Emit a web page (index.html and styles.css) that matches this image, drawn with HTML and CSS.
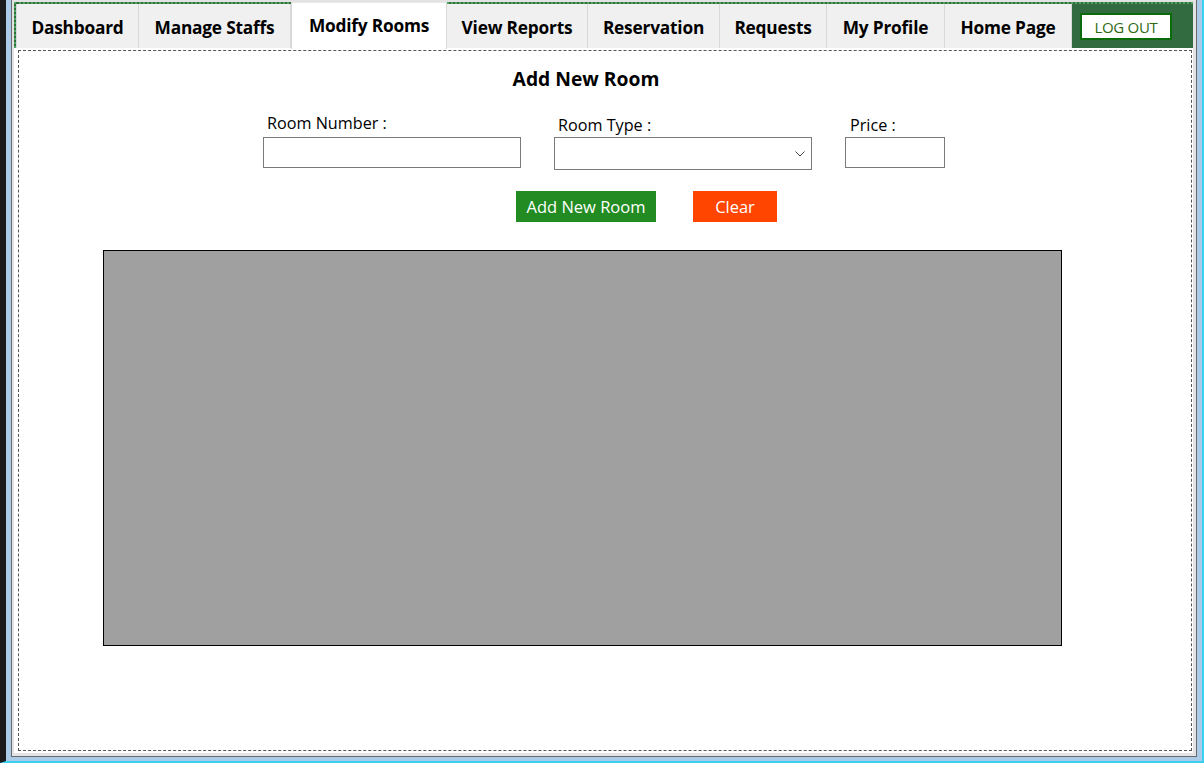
FILE: index.html
```html
<!DOCTYPE html>
<html>
<head>
<meta charset="utf-8">
<link rel="stylesheet" href="styles.css">
</head>
<body>
<div class="screen">
  <div class="win">
    <div class="tabctl">
      <div class="tabrow">
        <div class="tab w1">Dashboard</div>
        <div class="tab w2">Manage Staffs</div>
        <div class="tab w3 active">Modify Rooms</div>
        <div class="tab w4">View Reports</div>
        <div class="tab w5">Reservation</div>
        <div class="tab w6">Requests</div>
        <div class="tab w7">My Profile</div>
        <div class="tab w8">Home Page</div>
        <div class="greenbar"><button class="logout">LOG OUT</button></div>
      </div>
      <div class="panel">
        <div class="dashed">
          <div class="title">Add New Room</div>
          <div class="fields">
            <div class="field f-num">
              <label class="lbl l1">Room Number :</label>
              <input class="inp inp-num" type="text">
            </div>
            <div class="field f-type">
              <label class="lbl l2">Room Type :</label>
              <div class="select"><svg class="chev" width="10" height="6" viewBox="0 0 10 6"><path d="M0.5 0.5 L5 5 L9.5 0.5" fill="none" stroke="#444" stroke-width="1"/></svg></div>
            </div>
            <div class="field f-price">
              <label class="lbl l3">Price :</label>
              <input class="inp inp-price" type="text">
            </div>
          </div>
          <div class="buttons">
            <button class="btn add">Add New Room</button>
            <button class="btn clear">Clear</button>
          </div>
          <div class="grid"></div>
        </div>
      </div>
    </div>
  </div>
</div>
</body>
</html>
```
FILE: styles.css
```css
* { box-sizing: border-box; }
html, body { margin: 0; padding: 0; }
body { width: 1204px; height: 763px; overflow: hidden; font-family: "Open Sans", "Noto Sans", sans-serif; }

.screen {
  width: 1204px; height: 763px;
  background: #abcbe8;
  border-left: 6px solid #1b1b1b;
  border-right: 2px solid #3ad0f2;
  border-bottom: 2px solid #3ad0f2;
  padding: 0 5px 4px 5px;
  display: flex;
}
.win {
  flex: 1;
  background: #e3e3e3;
  border: 1px solid #6a6a6a;
  border-top: none;
  padding: 2px 3px 3px 2px;
  display: flex;
}
.tabctl { flex: 1; display: flex; flex-direction: column; }

.tabrow {
  height: 46px;
  display: flex;
  background: #316b3f;
  border-top: 2px dotted #4fa862;
  border-left: 2px dotted #4fa862;
}
.tab {
  height: 44px;
  background: #f0f0f0;
  border-right: 1px solid #d9d9d9;
  display: flex; align-items: center; justify-content: center;
  font-weight: 700; font-size: 17.3px; color: #000;
  padding-top: 3px;
  letter-spacing: -0.2px;
}
.tab.w1 { width: 123px; border-left: 1px solid #d9d9d9; }
.tab.w2 { width: 152px; }
.tab.w3 { width: 156px; }
.tab.w4 { width: 141px; }
.tab.w5 { width: 132px; }
.tab.w6 { width: 107px; }
.tab.w7 { width: 118px; }
.tab.w8 { width: 127px; }
.tab.active {
  background: #fff;
  height: 47px;
  margin-top: -2px;
  border-top: 1px solid #e8e8e8;
  border-left: 1px solid #d9d9d9;
  padding-top: 1px;
  padding-bottom: 2px;
  position: relative;
  z-index: 1;
}
.greenbar { flex: 1; padding: 9px 0 0 8px; }
.logout {
  display: block;
  width: 92px; height: 27px;
  background: #fff;
  border: 2px solid #0b6b0b;
  color: #2d6a10;
  font-family: "Open Sans", sans-serif;
  font-size: 15px;
  padding: 0;
  letter-spacing: -0.3px;
}

.panel {
  flex: 1;
  background: #fff;
  padding: 2px 1px 2px 4px;
  display: flex;
}
.dashed {
  flex: 1;
  border: 1px dashed #555;
}
.title {
  width: 1134px;
  margin-top: 15px;
  text-align: center;
  font-weight: 700;
  font-size: 19.3px;
  line-height: 25px;
}
.fields {
  display: flex;
  margin-top: 19px;
  margin-left: 244px;
}
.field { display: flex; flex-direction: column; }
.f-num { width: 258px; }
.f-type { width: 258px; margin-left: 33px; }
.f-price { width: 100px; margin-left: 33px; }
.lbl { display: block; font-size: 16.2px; line-height: 22px; height: 27px; padding-top: 2px; }
.l1 { padding-left: 4px; }
.l2 { padding-left: 4px; padding-top: 4px; }
.l3 { padding-left: 5px; padding-top: 4px; }
.inp {
  height: 31px;
  border: 1px solid #7a7a7a;
  background: #fff;
  padding: 0;
  outline: none;
}
.inp-num { width: 258px; }
.inp-price { width: 100px; }
.select {
  width: 258px; height: 33px;
  border: 1px solid #7a7a7a;
  background: #fff;
  display: flex; align-items: center; justify-content: flex-end;
  padding-right: 6px;
}
.chev { display: block; margin-top: 1px; }

.buttons {
  display: flex;
  margin-top: 21px;
  margin-left: 497px;
}
.btn {
  height: 31px;
  border: none;
  color: #fff;
  font-family: "Open Sans", sans-serif;
  font-size: 16.5px;
  padding: 0;
}
.add { width: 140px; background: #228b22; }
.clear { width: 84px; background: #ff4500; margin-left: 37px; }

.grid {
  width: 959px; height: 396px;
  margin-top: 28px;
  margin-left: 84px;
  background: #a0a0a0;
  border: 1px solid #000;
}
```
